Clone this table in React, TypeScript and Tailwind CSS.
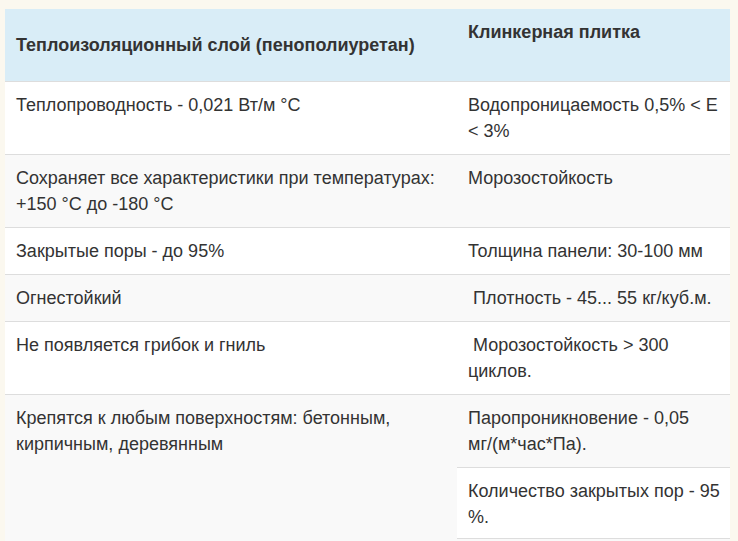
import React from "react";

const cell = "border-t border-[#dddddd] pl-[11px] pr-[8px] py-[10px] align-top";

export default function App() {
  return (
    <div
      className="min-h-screen bg-[#fbf8ef] pl-[5px] pt-[9px] text-[18px] leading-[26px] text-[#333333]"
      style={{ fontFamily: '"Liberation Sans", Arial, sans-serif' }}
    >
      <table className="w-[725px] table-fixed border-collapse">
        <colgroup>
          <col className="w-[452px]" />
          <col className="w-[273px]" />
        </colgroup>
        <thead>
          <tr className="h-[72px] bg-[#d9edf7]">
            <th className="pl-[11px] pr-[8px] py-[10px] text-left align-middle font-bold">
              Теплоизоляционный слой (пенополиуретан)
            </th>
            <th className="pl-[11px] pr-[8px] py-[10px] text-left align-top font-bold">
              Клинкерная плитка
            </th>
          </tr>
        </thead>
        <tbody>
          <tr className="bg-white">
            <td className={cell}>Теплопроводность - 0,021 Вт/м °C</td>
            <td className={cell}>Водопроницаемость 0,5% &lt; E &lt; 3%</td>
          </tr>
          <tr className="bg-[#f9f9f9]">
            <td className={cell}>
              Сохраняет все характеристики при температурах: +150 °C до -180 °C
            </td>
            <td className={cell}>Морозостойкость</td>
          </tr>
          <tr className="bg-white">
            <td className={cell}>Закрытые поры - до 95%</td>
            <td className={cell}>Толщина панели: 30-100 мм</td>
          </tr>
          <tr className="bg-[#f9f9f9]">
            <td className={cell}>Огнестойкий</td>
            <td className={cell}>{"\u00a0"}Плотность - 45... 55 кг/куб.м.</td>
          </tr>
          <tr className="bg-white">
            <td className={cell}>Не появляется грибок и гниль</td>
            <td className={cell}>{"\u00a0"}Морозостойкость &gt; 300 циклов.</td>
          </tr>
          <tr className="bg-[#f9f9f9]">
            <td className={cell} rowSpan={3}>
              Крепятся к любым поверхностям: бетонным, кирпичным, деревянным
            </td>
            <td className={cell}>Паропроникновение - 0,05 мг/(м*час*Па).</td>
          </tr>
          <tr className="bg-white">
            <td className="border-t border-[#dddddd] pl-[11px] pr-[8px] pt-[10px] pb-[8px] align-top">
              Количество закрытых пор - 95 %.
            </td>
          </tr>
          <tr className="h-[40px] bg-[#f9f9f9]">
            <td className="border-t border-[#dddddd]"></td>
          </tr>
        </tbody>
      </table>
    </div>
  );
}
